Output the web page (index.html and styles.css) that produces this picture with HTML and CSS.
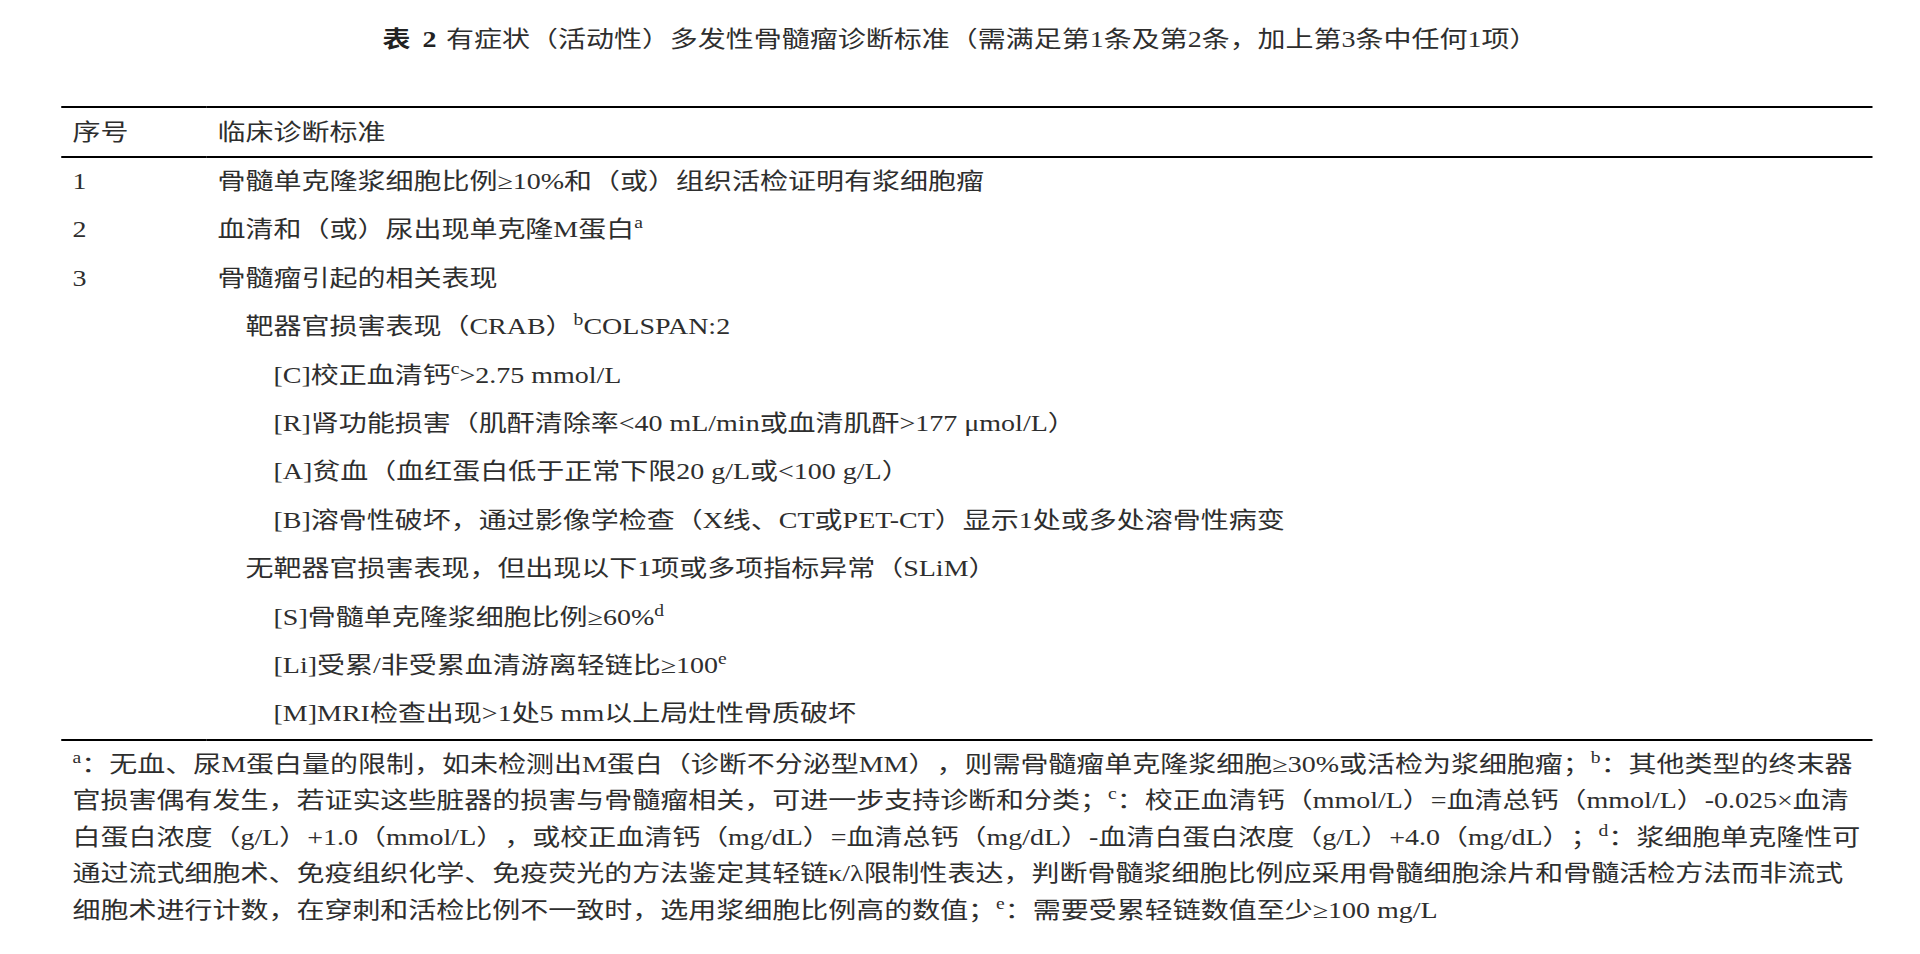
FILE: index.html
```html
<!DOCTYPE html>
<html lang="zh-CN">
<head>
<meta charset="utf-8">
<title>表 2 有症状（活动性）多发性骨髓瘤诊断标准</title>
<link rel="stylesheet" href="styles.css">
</head>
<body>
<div class="page">
  <h1 class="title"><b>表 2</b> 有症状（活动性）多发性骨髓瘤诊断标准（需满足第1条及第2条，加上第3条中任何1项）</h1>
  <div class="doc">
    <table class="criteria">
      <colgroup><col class="col-num"><col></colgroup>
      <thead>
        <tr><th>序号</th><th>临床诊断标准</th></tr>
      </thead>
      <tbody>
        <tr><td>1</td><td>骨髓单克隆浆细胞比例≥10%和（或）组织活检证明有浆细胞瘤</td></tr>
        <tr><td>2</td><td>血清和（或）尿出现单克隆M蛋白<sup>a</sup></td></tr>
        <tr><td>3</td><td>骨髓瘤引起的相关表现</td></tr>
        <tr><td></td><td class="lv1">靶器官损害表现（CRAB）<sup>b</sup>COLSPAN:2</td></tr>
        <tr><td></td><td class="lv2">[C]校正血清钙<sup>c</sup>&gt;2.75 mmol/L</td></tr>
        <tr><td></td><td class="lv2">[R]肾功能损害（肌酐清除率&lt;40 mL/min或血清肌酐&gt;177 μmol/L）</td></tr>
        <tr><td></td><td class="lv2">[A]贫血（血红蛋白低于正常下限20 g/L或&lt;100 g/L）</td></tr>
        <tr><td></td><td class="lv2">[B]溶骨性破坏，通过影像学检查（X线、CT或PET-CT）显示1处或多处溶骨性病变</td></tr>
        <tr><td></td><td class="lv1">无靶器官损害表现，但出现以下1项或多项指标异常（SLiM）</td></tr>
        <tr><td></td><td class="lv2">[S]骨髓单克隆浆细胞比例≥60%<sup>d</sup></td></tr>
        <tr><td></td><td class="lv2">[Li]受累/非受累血清游离轻链比≥100<sup>e</sup></td></tr>
        <tr class="last"><td></td><td class="lv2">[M]MRI检查出现&gt;1处5 mm以上局灶性骨质破坏</td></tr>
      </tbody>
    </table>
    <p class="notes"><sup>a</sup>：无血、尿M蛋白量的限制，如未检测出M蛋白（诊断不分泌型MM），则需骨髓瘤单克隆浆细胞≥30%或活检为浆细胞瘤；<sup>b</sup>：其他类型的终末器<br>官损害偶有发生，若证实这些脏器的损害与骨髓瘤相关，可进一步支持诊断和分类；<sup>c</sup>：校正血清钙（mmol/L）=血清总钙（mmol/L）-0.025×血清<br>白蛋白浓度（g/L）+1.0（mmol/L），或校正血清钙（mg/dL）=血清总钙（mg/dL）-血清白蛋白浓度（g/L）+4.0（mg/dL）；<sup>d</sup>：浆细胞单克隆性可<br>通过流式细胞术、免疫组织化学、免疫荧光的方法鉴定其轻链κ/λ限制性表达，判断骨髓浆细胞比例应采用骨髓细胞涂片和骨髓活检方法而非流式<br>细胞术进行计数，在穿刺和活检比例不一致时，选用浆细胞比例高的数值；<sup>e</sup>：需要受累轻链数值至少≥100 mg/L</p>
  </div>
</div>
</body>
</html>
```
FILE: styles.css
```css
html, body {
  margin: 0;
  padding: 0;
  background: #ffffff;
  overflow: hidden;
}

body {
  font-family: "Liberation Serif", "Noto Sans CJK SC", serif;
  font-size: 22.4px;
  color: #2e2e2e;
  text-spacing-trim: space-all;
}

/* the document is laid out at 1536px and widened to the 1920px window */
.page {
  width: 1536px;
  transform: scaleX(1.25);
  transform-origin: 0 0;
}

.title {
  margin: 0;
  padding-top: 25px;
  font-size: 22.4px;
  line-height: 30px;
  font-weight: normal;
  text-align: center;
  color: #2e2e2e;
  word-spacing: 2px;
}

.title b {
  font-weight: bold;
  color: #222222;
  word-spacing: 4px;
}

.doc {
  margin: 51px 0 0 49px;
  width: 1449px;
}

.criteria {
  width: 100%;
  table-layout: fixed;
  border-collapse: separate;
  border-spacing: 0;
}

.col-num {
  width: 116px;
}

.criteria th,
.criteria td {
  padding: 0 0 0 9px;
  text-align: left;
  vertical-align: middle;
  white-space: nowrap;
  font-weight: normal;
}

.criteria th {
  height: 46px;
  padding-top: 2px;
  line-height: 46px;
  border-top: 2px solid #000000;
  border-bottom: 2px solid #000000;
}

.criteria td {
  height: 42.4px;
  padding-top: 3px;
  padding-bottom: 3px;
  line-height: 42.4px;
}

.criteria .last td {
  border-bottom: 2px solid #000000;
}

.criteria td.lv1 {
  padding-left: calc(9px + 1em);
}

.criteria td.lv2 {
  padding-left: calc(9px + 2em);
}

sup {
  font-size: 0.7em;
  line-height: 0;
  vertical-align: 0.55em;
}

.notes {
  margin: 6px 0 0 0;
  padding-left: 9px;
  line-height: 36.4px;
  white-space: nowrap;
}
```
